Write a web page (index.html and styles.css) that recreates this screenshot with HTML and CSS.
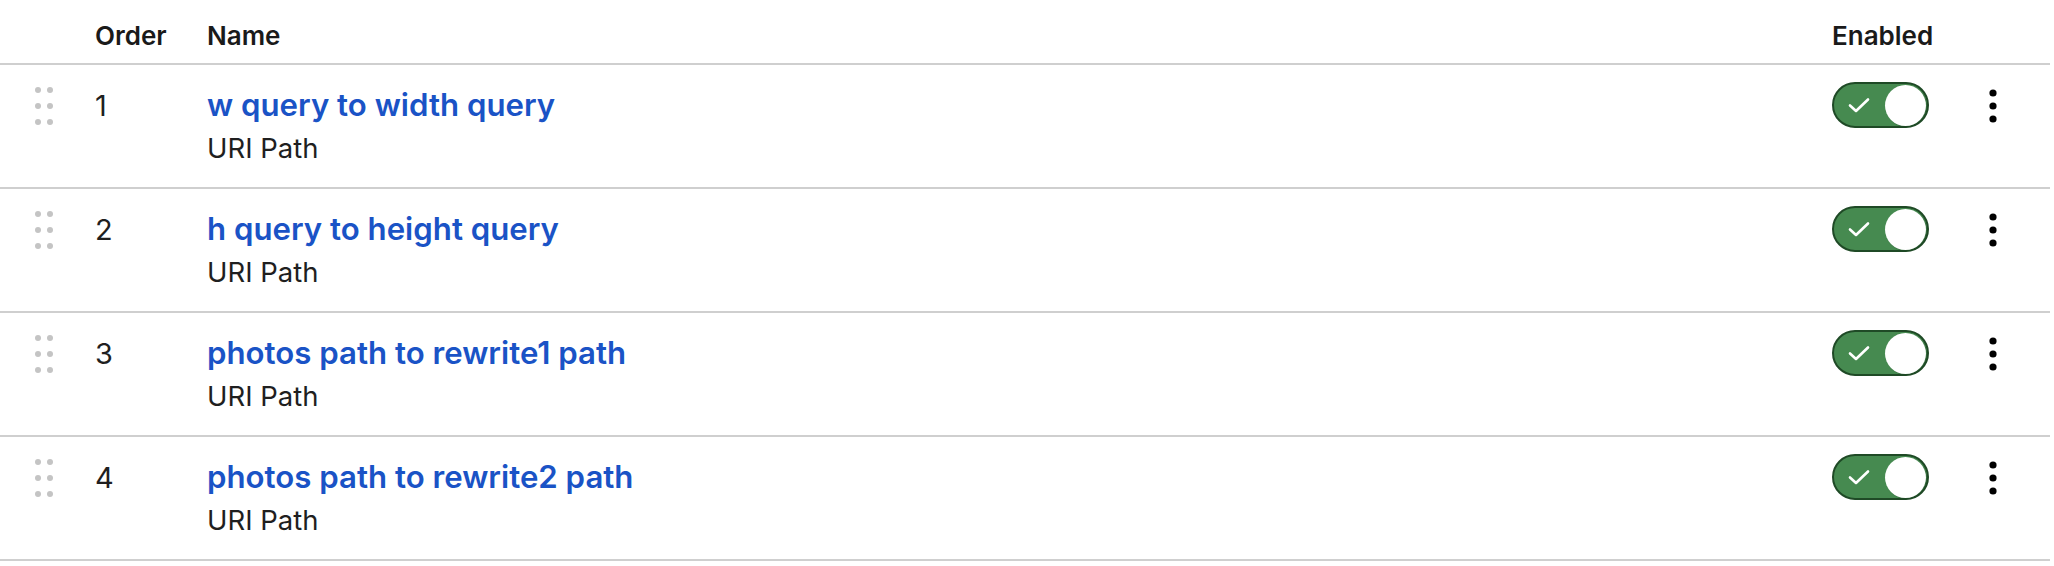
FILE: index.html
```html
<!DOCTYPE html>
<html lang="en">
<head>
<meta charset="utf-8">
<title>Rules</title>
<link rel="stylesheet" href="styles.css">
</head>
<body>
<div class="table">
  <div class="row head">
    <div class="cell"></div>
    <div class="cell">Order</div>
    <div class="cell">Name</div>
    <div class="cell">Enabled</div>
    <div class="cell"></div>
  </div>

  <div class="row">
    <div class="cell handle-cell">
      <svg class="handle" width="24" height="40" viewBox="0 0 24 40"><g fill="#c4c4c4"><circle cx="6" cy="4" r="3"/><circle cx="18" cy="4" r="3"/><circle cx="6" cy="20" r="3"/><circle cx="18" cy="20" r="3"/><circle cx="6" cy="36" r="3"/><circle cx="18" cy="36" r="3"/></g></svg>
    </div>
    <div class="cell order">1</div>
    <div class="cell name">
      <a class="link" href="#">w query to width query</a>
      <div class="sub">URI Path</div>
    </div>
    <div class="cell">
      <span class="toggle"><svg class="check" width="24" height="18" viewBox="0 0 24 18"><path d="M3 9.5 L9 15 L21 3.5" fill="none" stroke="#fff" stroke-width="2.6" stroke-linecap="round" stroke-linejoin="round"/></svg><span class="knob"></span></span>
    </div>
    <div class="cell kebab-cell">
      <svg class="kebab" width="8" height="34" viewBox="0 0 8 34"><g fill="#000"><circle cx="4" cy="4" r="3.6"/><circle cx="4" cy="17" r="3.6"/><circle cx="4" cy="30" r="3.6"/></g></svg>
    </div>
  </div>

  <div class="row">
    <div class="cell handle-cell">
      <svg class="handle" width="24" height="40" viewBox="0 0 24 40"><g fill="#c4c4c4"><circle cx="6" cy="4" r="3"/><circle cx="18" cy="4" r="3"/><circle cx="6" cy="20" r="3"/><circle cx="18" cy="20" r="3"/><circle cx="6" cy="36" r="3"/><circle cx="18" cy="36" r="3"/></g></svg>
    </div>
    <div class="cell order">2</div>
    <div class="cell name">
      <a class="link" href="#">h query to height query</a>
      <div class="sub">URI Path</div>
    </div>
    <div class="cell">
      <span class="toggle"><svg class="check" width="24" height="18" viewBox="0 0 24 18"><path d="M3 9.5 L9 15 L21 3.5" fill="none" stroke="#fff" stroke-width="2.6" stroke-linecap="round" stroke-linejoin="round"/></svg><span class="knob"></span></span>
    </div>
    <div class="cell kebab-cell">
      <svg class="kebab" width="8" height="34" viewBox="0 0 8 34"><g fill="#000"><circle cx="4" cy="4" r="3.6"/><circle cx="4" cy="17" r="3.6"/><circle cx="4" cy="30" r="3.6"/></g></svg>
    </div>
  </div>

  <div class="row">
    <div class="cell handle-cell">
      <svg class="handle" width="24" height="40" viewBox="0 0 24 40"><g fill="#c4c4c4"><circle cx="6" cy="4" r="3"/><circle cx="18" cy="4" r="3"/><circle cx="6" cy="20" r="3"/><circle cx="18" cy="20" r="3"/><circle cx="6" cy="36" r="3"/><circle cx="18" cy="36" r="3"/></g></svg>
    </div>
    <div class="cell order">3</div>
    <div class="cell name">
      <a class="link" href="#">photos path to rewrite1 path</a>
      <div class="sub">URI Path</div>
    </div>
    <div class="cell">
      <span class="toggle"><svg class="check" width="24" height="18" viewBox="0 0 24 18"><path d="M3 9.5 L9 15 L21 3.5" fill="none" stroke="#fff" stroke-width="2.6" stroke-linecap="round" stroke-linejoin="round"/></svg><span class="knob"></span></span>
    </div>
    <div class="cell kebab-cell">
      <svg class="kebab" width="8" height="34" viewBox="0 0 8 34"><g fill="#000"><circle cx="4" cy="4" r="3.6"/><circle cx="4" cy="17" r="3.6"/><circle cx="4" cy="30" r="3.6"/></g></svg>
    </div>
  </div>

  <div class="row">
    <div class="cell handle-cell">
      <svg class="handle" width="24" height="40" viewBox="0 0 24 40"><g fill="#c4c4c4"><circle cx="6" cy="4" r="3"/><circle cx="18" cy="4" r="3"/><circle cx="6" cy="20" r="3"/><circle cx="18" cy="20" r="3"/><circle cx="6" cy="36" r="3"/><circle cx="18" cy="36" r="3"/></g></svg>
    </div>
    <div class="cell order">4</div>
    <div class="cell name">
      <a class="link" href="#">photos path to rewrite2 path</a>
      <div class="sub">URI Path</div>
    </div>
    <div class="cell">
      <span class="toggle"><svg class="check" width="24" height="18" viewBox="0 0 24 18"><path d="M3 9.5 L9 15 L21 3.5" fill="none" stroke="#fff" stroke-width="2.6" stroke-linecap="round" stroke-linejoin="round"/></svg><span class="knob"></span></span>
    </div>
    <div class="cell kebab-cell">
      <svg class="kebab" width="8" height="34" viewBox="0 0 8 34"><g fill="#000"><circle cx="4" cy="4" r="3.6"/><circle cx="4" cy="17" r="3.6"/><circle cx="4" cy="30" r="3.6"/></g></svg>
    </div>
  </div>
</div>
</body>
</html>
```

FILE: styles.css
```css
* { box-sizing: border-box; }
html, body {
  margin: 0;
  padding: 0;
  background: #ffffff;
}
body {
  font-family: Inter, "Noto Sans", "Liberation Sans", sans-serif;
  color: #1c1c1c;
}
.table {
  width: 2050px;
}
.row {
  display: grid;
  grid-template-columns: 95px 112px 1fr 130px 88px;
  border-bottom: 2px solid #cfcfcf;
}
.row.head {
  height: 65px;
  padding-top: 19px;
  font-size: 26px;
  line-height: 34px;
  font-weight: 600;
  color: #1a1a1a;
}
.row:not(.head) {
  height: 124px;
  padding-top: 17px;
}
.handle-cell {
  padding-left: 32px;
  padding-top: 4px;
}
.handle { display: block; }
.order {
  padding-top: 5px;
  font-size: 29px;
  line-height: 38px;
  color: #1f1f1f;
}
.name {
  padding-top: 4px;
  display: flex;
  flex-direction: column;
  align-items: flex-start;
}
.link {
  font-size: 31.2px;
  line-height: 38px;
  font-weight: 600;
  color: #1a53c6;
  text-decoration: none;
}
.sub {
  margin-top: 7px;
  font-size: 27.5px;
  line-height: 34px;
  color: #1f1f1f;
}
.toggle {
  display: flex;
  align-items: center;
  justify-content: space-between;
  width: 97px;
  height: 46px;
  padding: 0 1px 0 13px;
  border-radius: 23px;
  background: #468a50;
  border: 2px solid #1f4a26;
}
.check { display: block; }
.knob {
  width: 41px;
  height: 41px;
  border-radius: 50%;
  background: #ffffff;
  box-shadow: 1px 1px 1px rgba(31, 74, 38, 0.5);
}
.kebab-cell {
  padding-left: 27px;
  padding-top: 7px;
}
.kebab { display: block; }
```
